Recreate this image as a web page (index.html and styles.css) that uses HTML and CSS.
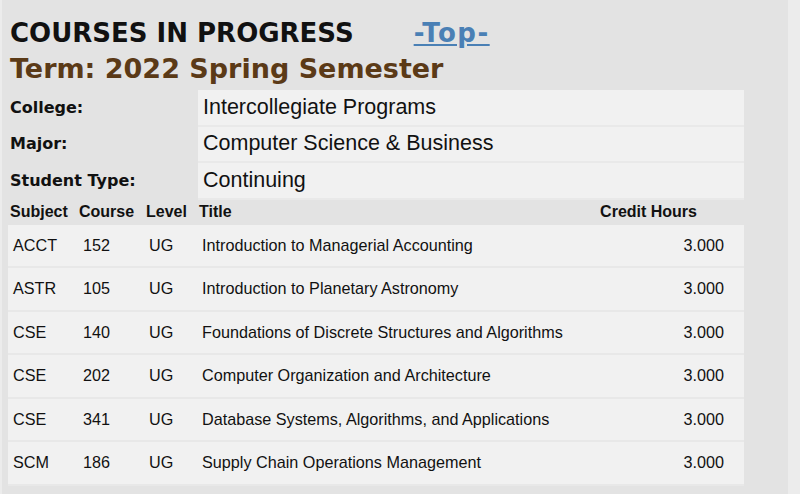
FILE: index.html
```html
<!DOCTYPE html>
<html>
<head>
<meta charset="utf-8">
<link rel="stylesheet" href="styles.css">
</head>
<body>
<div class="page">
  <div class="head">
    <h1 class="title">COURSES IN PROGRESS</h1>
    <a class="top" href="#">-Top-</a>
  </div>
  <h2 class="term">Term: 2022 Spring Semester</h2>
  <table class="info">
    <tr><th>College:</th><td>Intercollegiate Programs</td></tr>
    <tr><th>Major:</th><td>Computer Science &amp; Business</td></tr>
    <tr><th>Student Type:</th><td>Continuing</td></tr>
  </table>
  <table class="courses">
    <colgroup>
      <col class="w-subj"><col class="w-crs"><col class="w-lvl"><col class="w-title"><col class="w-cr">
    </colgroup>
    <thead>
      <tr><th>Subject</th><th class="h-crs">Course</th><th>Level</th><th>Title</th><th class="h-cr">Credit Hours</th></tr>
    </thead>
    <tbody>
      <tr><td>ACCT</td><td>152</td><td>UG</td><td>Introduction to Managerial Accounting</td><td class="num">3.000</td></tr>
      <tr><td>ASTR</td><td>105</td><td>UG</td><td>Introduction to Planetary Astronomy</td><td class="num">3.000</td></tr>
      <tr><td>CSE</td><td>140</td><td>UG</td><td>Foundations of Discrete Structures and Algorithms</td><td class="num">3.000</td></tr>
      <tr><td>CSE</td><td>202</td><td>UG</td><td>Computer Organization and Architecture</td><td class="num">3.000</td></tr>
      <tr><td>CSE</td><td>341</td><td>UG</td><td>Database Systems, Algorithms, and Applications</td><td class="num">3.000</td></tr>
      <tr><td>SCM</td><td>186</td><td>UG</td><td>Supply Chain Operations Management</td><td class="num">3.000</td></tr>
    </tbody>
  </table>
</div>
</body>
</html>
```
FILE: styles.css
```css
html, body {
  margin: 0;
  padding: 0;
  background: #ececec;
}
.page {
  margin-left: 2px;
  width: 780px;
  height: 494px;
  padding-left: 6px;
  background: #e3e3e3;
  overflow: hidden;
  box-sizing: content-box;
}
.head {
  display: flex;
  align-items: baseline;
  gap: 60px;
  padding-top: 17px;
  padding-left: 2px;
}
.title {
  margin: 0;
  font-family: "DejaVu Sans", Verdana, sans-serif;
  font-weight: bold;
  font-size: 26px;
  line-height: 32px;
  color: #111;
}
.top {
  font-family: "DejaVu Sans", Verdana, sans-serif;
  font-weight: bold;
  font-size: 26px;
  letter-spacing: 1.5px;
  color: #4a80b5;
  text-decoration: underline;
}
.term {
  margin: 2px 0 0 2px;
  font-family: "DejaVu Sans", Verdana, sans-serif;
  font-weight: bold;
  font-size: 27px;
  line-height: 36px;
  color: #5b3a17;
}
.info {
  border-collapse: collapse;
  margin-top: 3px;
  width: 736px;
}
.info th {
  width: 188px;
  padding: 0 0 0 2px;
  text-align: left;
  font-family: "DejaVu Sans", Verdana, sans-serif;
  font-size: 16px;
  font-weight: bold;
  color: #111;
  height: 34.5px;
  border-bottom: 2px solid #e3e3e3;
}
.info td {
  background: #f1f1f1;
  padding: 0 0 0 5px;
  font-family: "Liberation Sans", Arial, sans-serif;
  font-size: 21.5px;
  color: #111;
  height: 34.5px;
  border-bottom: 2px solid #e9e9e9;
}
.courses {
  border-collapse: collapse;
  table-layout: fixed;
  width: 736px;
  font-family: "Liberation Sans", Arial, sans-serif;
  color: #111;
}
.w-subj { width: 70px; }
.w-crs { width: 66px; }
.w-lvl { width: 53px; }
.w-cr { width: 150px; }
.courses thead th {
  text-align: left;
  font-size: 16px;
  font-weight: bold;
  height: 25px;
  padding: 0 0 0 2px;
  vertical-align: middle;
}
.courses thead th.h-crs {
  padding-left: 1px;
}
.courses thead th.h-cr {
  text-align: right;
  padding-right: 47px;
}
.courses tbody td {
  background: #f1f1f1;
  font-size: 16.2px;
  height: 41.5px;
  padding: 0 0 0 5px;
  border-bottom: 2px solid #e8e8e8;
  white-space: nowrap;
}
.courses tbody td.num {
  text-align: right;
  padding-right: 20px;
}
```
